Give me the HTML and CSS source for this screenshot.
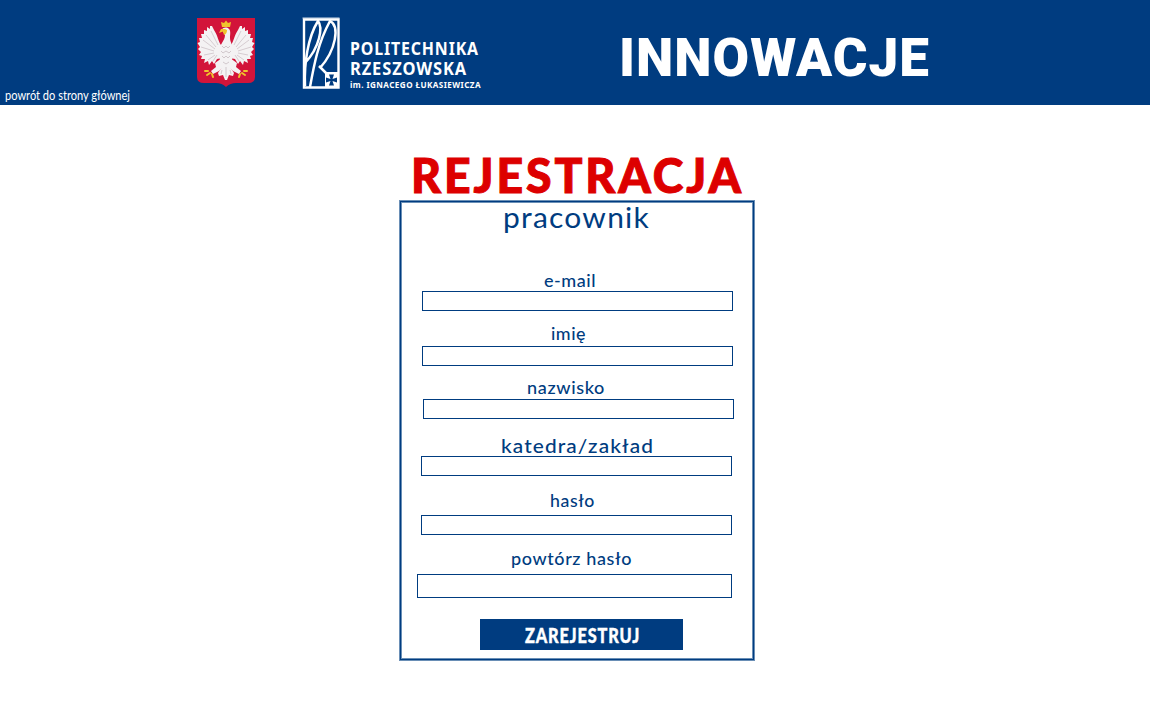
FILE: index.html
```html
<!DOCTYPE html>
<html lang="pl">
<head>
<meta charset="utf-8">
<title>Innowacje – rejestracja</title>
<link rel="stylesheet" href="styles.css">
</head>
<body>
<header class="header">
  <a class="back" href="#"><svg class="lettering" width="130" height="20"><text x="5" y="15" font-size="13.5" textLength="125" lengthAdjust="spacingAndGlyphs">powrót do strony głównej</text></svg></a>
  <svg class="emblem" width="60" height="71" viewBox="0 0 60 71" role="img" aria-label="Godło Polski">
    <path fill="#d2143a" d="M1 1H59V60Q59 66 52 66H40Q34 66 30 70Q26 66 20 66H8Q1 66 1 60Z"/>
    <g id="wing">
      <path fill="#f4f2f3" d="M25 28C22 24 22 19 18 13L16 9L14 9L14 12L11 10L11 14L8 13L8 17L5 17L6 21L3 21L4 25L1.500 26L4 30L2 32L5 35L3 38L6 39L5 42L9 42L8 46L12 44L13 48L16 44L18 47L21 42L26 41Z"/>
      <path fill="none" stroke="#c8bcc1" stroke-width=".7" d="M22 28L15 14M20 30L10 18M19 32L7 23M18 34L5 30M18 36L8 38M19 38L12 43M21 38L17 44"/>
      <path fill="#f4f2f3" d="M26 41L19 46L20 50L15 54L17 57L23 54L28 49Z"/>
      <path fill="none" stroke="#f0c52c" stroke-width="2" stroke-linecap="round" d="M12 54L9 54M14 56L11 58M16 57L17 60"/>
    </g>
    <use href="#wing" transform="translate(60 0) scale(-1 1)"/>
    <path fill="#f4f2f3" d="M26 13C27 10 31 10 33 12C35 14 34 18 34 21C34 25 37 28 37 34C37 41 35 47 34 50L38 56L37 59L33 58L31 63L29 63L27 58L23 59L22 56L26 50C24 45 23 39 23 34C23 28 29 24 29 18Z"/>
    <path fill="none" stroke="#c8bcc1" stroke-width=".8" d="M26 29l2 2 2-2 2 2 2-2M25 34l2 2 3-2 3 2 2-2M26 39l2 2 2-2 2 2 2-2M27 45l3 2 3-2M30 50v10M26 53l-1 4M34 53l1 4"/>
    <path fill="#f0c52c" d="M25 5L28 6L30 3.500L32 6L35 5L34 10H26ZM29 12L25 12L23 16L27 14.500L28 18Q31 17 31 13Z"/>
  </svg>
  <svg class="brand" width="182" height="76" role="img" aria-label="Politechnika Rzeszowska">
    <path fill="#fff" opacity=".4" d="M.5 2h37v2h-37z"/>
    <g fill="none" stroke="#fff">
      <path stroke-width="2.400" d="M2 4.500H36.500V72.500H2Z"/>
      <path stroke-width="2.500" d="M3 71C2 48 6 22 16 6C21 12 18 32 3 48M8 72C12 50 16 28 28 6C38 11 34 35 18 53M17 51L26 60"/>
    </g>
    <path fill="#fff" d="M23 57H37V73H23Z"/>
    <path fill="#003c80" d="M27 59.500h5l-1.500 4.500 4.500-1.500v5l-4.500-1.500 1.500 4.500h-5l1.500-4.500-4.500 1.500v-5l4.500 1.500Z"/>
    <g class="school">
      <text x="48" y="40" font-size="18.500" letter-spacing="1" textLength="129" lengthAdjust="spacingAndGlyphs">POLITECHNIKA</text>
      <text x="48" y="60" font-size="18.500" letter-spacing="1" textLength="117" lengthAdjust="spacingAndGlyphs">RZESZOWSKA</text>
      <text x="48" y="73" font-size="9.500" letter-spacing=".5" textLength="131" lengthAdjust="spacingAndGlyphs">im. IGNACEGO ŁUKASIEWICZA</text>
    </g>
  </svg>
  <svg class="banner" width="316" height="60" role="img" aria-label="Innowacje"><text x="1" y="46" font-size="53.500" letter-spacing="1" textLength="311" lengthAdjust="spacingAndGlyphs">INNOWACJE</text></svg>
</header>
<main class="main">
  <h1 class="title"><svg class="lettering" width="336" height="50"><text x="1" y="43" font-size="48" letter-spacing="3" textLength="333" lengthAdjust="spacingAndGlyphs">REJESTRACJA</text></svg></h1>
  <form class="panel">
    <h2 class="role"><svg class="lettering" width="352" height="40"><text x="102" y="26" font-size="29" textLength="147" letter-spacing="1.200" lengthAdjust="spacingAndGlyphs">pracownik</text></svg></h2>
    <div class="field email">
      <label for="email"><svg class="lettering" width="352" height="26"><text x="143" y="20.500" font-size="17.500" textLength="52" lengthAdjust="spacingAndGlyphs" letter-spacing=".5">e-mail</text></svg></label>
      <input id="email" type="text">
    </div>
    <div class="field first-name">
      <label for="first"><svg class="lettering" width="352" height="26"><text x="150" y="20" font-size="17.500" textLength="35" lengthAdjust="spacingAndGlyphs" letter-spacing=".5">imię</text></svg></label>
      <input id="first" type="text">
    </div>
    <div class="field last-name">
      <label for="last"><svg class="lettering" width="352" height="26"><text x="126" y="20" font-size="17.500" textLength="78" lengthAdjust="spacingAndGlyphs" letter-spacing=".6">nazwisko</text></svg></label>
      <input id="last" type="text">
    </div>
    <div class="field department">
      <label for="dept"><svg class="lettering" width="352" height="26"><text x="100" y="20.500" font-size="19" textLength="153" lengthAdjust="spacingAndGlyphs" letter-spacing="1">katedra/zakład</text></svg></label>
      <input id="dept" type="text">
    </div>
    <div class="field password">
      <label for="pass"><svg class="lettering" width="352" height="26"><text x="149" y="20" font-size="18" textLength="45" lengthAdjust="spacingAndGlyphs" letter-spacing=".6">hasło</text></svg></label>
      <input id="pass" type="password">
    </div>
    <div class="field repeat">
      <label for="pass2"><svg class="lettering" width="352" height="26"><text x="110" y="20" font-size="18" textLength="121" lengthAdjust="spacingAndGlyphs" letter-spacing=".6">powtórz hasło</text></svg></label>
      <input id="pass2" type="password">
    </div>
    <button class="submit" type="button"><svg class="lettering" width="203" height="31"><text x="45" y="24" font-size="20" letter-spacing="1" textLength="115" lengthAdjust="spacingAndGlyphs">ZAREJESTRUJ</text></svg></button>
  </form>
</main>
</body>
</html>
```

FILE: styles.css
```css
* { box-sizing: border-box; }
body { margin: 0; background: #fff; color: #003c80; font-family: Lato, sans-serif; }
svg { display: block; overflow: visible; }
.lettering { fill: currentColor; }
.header { display: flex; align-items: flex-start; height: 105px; background: #003c80; color: #fff; }
.back { margin-top: 85px; color: #fff; text-decoration: none; }
.emblem { margin: 17px 0 0 66px; }
.brand { margin: 15px 0 0 45.5px; }
.school { fill: #fff; font-family: "Noto Sans", sans-serif; font-weight: 700; }
.banner { margin: 30px 0 0 134.5px; fill: #fff; font-family: Roboto, sans-serif; font-weight: 900; }
.main { display: flex; flex-direction: column; width: 357px; margin: 45px 0 0 399px; }
.title { margin: 0 0 0 11px; color: #d00; font-weight: 900; }
.title .lettering { stroke: #d00; stroke-width: 1; }
.panel { display: flex; flex-direction: column; width: 356px; height: 461px; padding: 1px; border: 1px solid #6a8fb6; box-shadow: inset 0 0 0 1px #003c80, inset 0 0 0 2px #6a8fb6; }
.role { margin: 0; font-weight: 400; }
.field { display: flex; flex-direction: column; font-weight: 500; }
.field label { height: 26px; }
.field input { width: 311px; height: 20px; margin: 0 0 0 21px; padding: 0 4px; border: 1px solid #003c80; border-radius: 0; outline: 0; background: #fff; }
.email { margin-top: 24px; }
.email input { margin-top: -1px; }
.first-name { margin-top: 9px; }
.last-name { margin-top: 8px; }
.last-name input { margin-left: 22px; margin-top: -1px; }
.department { margin-top: 13px; }
.department input { margin-left: 20px; margin-top: -2px; }
.password { margin-top: 11px; }
.password input { margin-left: 20px; margin-top: 2px; }
.repeat { margin-top: 10px; }
.repeat input { width: 315px; height: 24px; margin: 3px 0 0 16px; }
.submit { width: 203px; height: 31px; margin: 21px 0 0 79px; padding: 0; border: 0; background: #003c80; color: #fff; font: 900 20px Lato, sans-serif; }
.submit .lettering { stroke: #fff; stroke-width: .4; }
```
